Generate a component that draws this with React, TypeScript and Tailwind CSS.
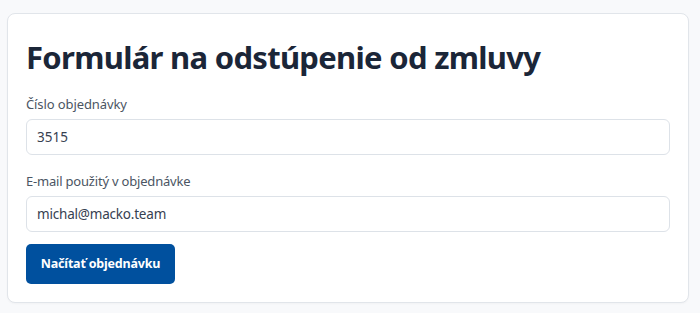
import React from "react";

export default function App() {
  return (
    <div className="min-h-[313px] w-[700px] bg-[#f8f9fb] pt-[13px] pl-[7px]" style={{ fontFamily: '"Noto Sans", "Open Sans", sans-serif' }}>
      <div className="w-[682px] h-[290px] rounded-lg border border-[#e1e5ea] bg-white px-[18px] pt-[24px] shadow-[0_1px_2px_rgba(0,0,0,0.03)]">
        <h1 className="text-[31px] leading-[38px] font-bold text-[#1b2638] tracking-[-0.7px]">Formulár na odstúpenie od zmluvy</h1>
        <div className="mt-[18px]">
          <label className="block text-[13px] leading-[20px] text-[#4b5563] tracking-[-0.1px]">Číslo objednávky</label>
          <input
            className="mt-[5px] block h-[36px] w-full rounded-md border border-[#dde2e8] bg-white px-[10px] text-[13.5px] text-[#374151] outline-none"
            defaultValue="3515"
          />
        </div>
        <div className="mt-[16px]">
          <label className="block text-[13px] leading-[20px] text-[#4b5563] tracking-[-0.2px]">E-mail použitý v objednávke</label>
          <input
            className="mt-[5px] block h-[36px] w-full rounded-md border border-[#dde2e8] bg-white px-[10px] text-[13.5px] text-[#374151] tracking-[-0.2px] outline-none"
            defaultValue="michal@macko.team"
          />
        </div>
        <button className="mt-[12px] h-[40px] w-[149px] rounded-[5px] bg-[#00509e] text-[12.5px] font-bold text-white tracking-[-0.2px]">Načítať objednávku</button>
      </div>
    </div>
  );
}
